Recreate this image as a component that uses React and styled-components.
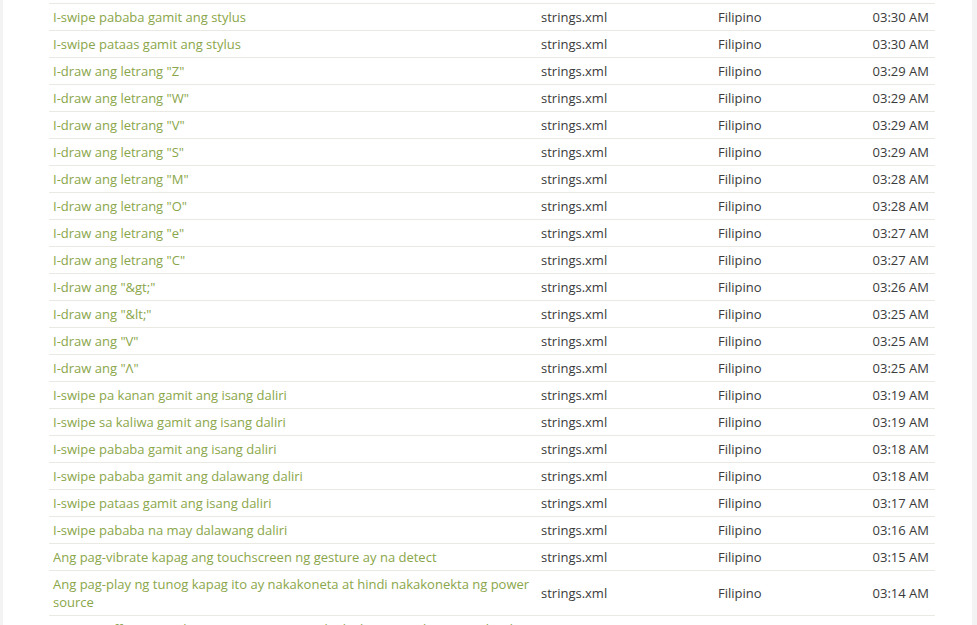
import React from "react";
import styled, { createGlobalStyle } from "styled-components";

const Global = createGlobalStyle`
  html, body { margin: 0; padding: 0; background: #f3f3f3; overflow: hidden; }
  body { font-family: "Open Sans", "Liberation Sans", sans-serif; }
`;

const Page = styled.div`
  display: flex;
  height: 625px;
  padding: 0 5px 0 3px;
  box-sizing: border-box;
`;

const Panel = styled.main`
  flex: 1;
  background: #fff;
  padding: 3px 0 0 46px;
  overflow: hidden;
`;

const Table = styled.div`
  width: 886px;
  display: flex;
  flex-direction: column;
`;

const Row = styled.div`
  display: grid;
  grid-template-columns: 488px 177px 1fr 130px;
  align-items: center;
  border-top: 1px solid #eae9e4;
  font-size: 13px;
  line-height: 18px;
`;

const Cell = styled.div`
  padding: 4px ${(p) => (p.$right ? "6px" : "4px")} 4px 4px;
  color: ${(p) => (p.$green ? "#8aa64a" : "#3a3a3a")};
  text-align: ${(p) => (p.$right ? "right" : "left")};
`;

const rows = [
  ["I-swipe pababa gamit ang stylus", "03:30 AM"],
  ["I-swipe pataas gamit ang stylus", "03:30 AM"],
  ['I-draw ang letrang "Z"', "03:29 AM"],
  ['I-draw ang letrang "W"', "03:29 AM"],
  ['I-draw ang letrang "V"', "03:29 AM"],
  ['I-draw ang letrang "S"', "03:29 AM"],
  ['I-draw ang letrang "M"', "03:28 AM"],
  ['I-draw ang letrang "O"', "03:28 AM"],
  ['I-draw ang letrang "e"', "03:27 AM"],
  ['I-draw ang letrang "C"', "03:27 AM"],
  ['I-draw ang "&gt;"', "03:26 AM"],
  ['I-draw ang "&lt;"', "03:25 AM"],
  ['I-draw ang "V"', "03:25 AM"],
  ['I-draw ang "Λ"', "03:25 AM"],
  ["I-swipe pa kanan gamit ang isang daliri", "03:19 AM"],
  ["I-swipe sa kaliwa gamit ang isang daliri", "03:19 AM"],
  ["I-swipe pababa gamit ang isang daliri", "03:18 AM"],
  ["I-swipe pababa gamit ang dalawang daliri", "03:18 AM"],
  ["I-swipe pataas gamit ang isang daliri", "03:17 AM"],
  ["I-swipe pababa na may dalawang daliri", "03:16 AM"],
  ["Ang pag-vibrate kapag ang touchscreen ng gesture ay na detect", "03:15 AM"],
  ["Ang pag-play ng tunog kapag ito ay nakakoneta at hindi nakakonekta ng power source", "03:14 AM"],
  [
    "Ang pag-off ng tunog kapag ang screen ay naka-lock at ang telepono ay hindi ginagamit sa ngayon, at kapag ang baterya ay mababa na at kailangan nang i-charge ang device",
    "03:13 AM",
  ],
];

export default function App() {
  return (
    <>
      <Global />
      <Page>
        <Panel>
          <Table>
            {rows.map(([text, time], i) => (
              <Row key={i}>
                <Cell $green>{text}</Cell>
                <Cell>strings.xml</Cell>
                <Cell>Filipino</Cell>
                <Cell $right>{time}</Cell>
              </Row>
            ))}
          </Table>
        </Panel>
      </Page>
    </>
  );
}
